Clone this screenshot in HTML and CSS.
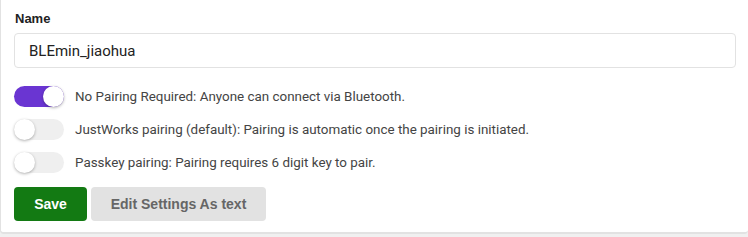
FILE: index.html
```html
<!DOCTYPE html>
<html lang="en">
<head>
  <meta charset="UTF-8" />
  <title>BLE Settings</title>
  <link rel="stylesheet" href="styles.css">
</head>
<body>
  <div class="card">
    <!-- Name field -->
    <label class="field-label" for="ble-name">Name</label>
    <input type="text" id="ble-name" class="text-input" value="BLEmin_jiaohua" />

    <!-- Pairing options -->
    <div class="option">
      <span class="switch on"><span class="knob"></span></span>
      <span class="option-text">No Pairing Required: Anyone can connect via Bluetooth.</span>
    </div>
    <div class="option">
      <span class="switch"><span class="knob"></span></span>
      <span class="option-text">JustWorks pairing (default): Pairing is automatic once the pairing is initiated.</span>
    </div>
    <div class="option">
      <span class="switch"><span class="knob"></span></span>
      <span class="option-text">Passkey pairing: Pairing requires 6 digit key to pair.</span>
    </div>

    <div class="actions">
      <button class="btn btn-save">Save</button>
      <button class="btn btn-edit">Edit Settings As text</button>
    </div>
  </div>
</body>
</html>
```

FILE: styles.css
```css
body {
  margin: 0;
  background: #f0f0f0;
  font-family: Roboto, "Liberation Sans", sans-serif;
}

.card {
  background: #fff;
  border-left: 1px solid #e2e2e2;
  border-bottom: 2px solid #e2e2e2;
  border-radius: 0 0 4px 4px;
  padding: 10px 12px 12px 13px;
  height: 210px;
}

.field-label {
  display: block;
  font-family: "Liberation Sans", Arial, sans-serif;
  font-weight: bold;
  font-size: 13px;
  color: #222;
  margin: 1px 0 7px 1px;
}

.text-input {
  display: block;
  box-sizing: border-box;
  width: 722px;
  height: 35px;
  padding: 0 14px;
  border: 1px solid #e2e2e2;
  border-radius: 4px;
  font-family: Roboto, sans-serif;
  font-size: 15px;
  color: #222;
  margin-bottom: 17px;
}

.option {
  display: flex;
  align-items: center;
  height: 22px;
  margin-bottom: 11px;
}

.switch {
  position: relative;
  width: 50px;
  height: 21px;
  border-radius: 11px;
  background: #efefef;
  flex-shrink: 0;
  margin-right: 11px;
}

.switch.on {
  background: #6a35d2;
}

.knob {
  position: absolute;
  top: 0;
  left: 0;
  width: 21px;
  height: 21px;
  border-radius: 50%;
  background: #fff;
  box-shadow: 0 1px 3px rgba(0,0,0,0.3);
}

.switch.on .knob {
  left: 29px;
}

.option-text {
  font-size: 13.4px;
  color: #444;
}

.actions {
  display: flex;
  gap: 4px;
  margin-top: 14px;
}

.btn {
  height: 34px;
  border: none;
  border-radius: 4px;
  font-family: "Liberation Sans", Arial, sans-serif;
  font-weight: bold;
  font-size: 14px;
  cursor: pointer;
}

.btn-save {
  width: 73px;
  background: #137a13;
  color: #fff;
}

.btn-edit {
  width: 175px;
  background: #e2e2e2;
  color: #666;
}
```
